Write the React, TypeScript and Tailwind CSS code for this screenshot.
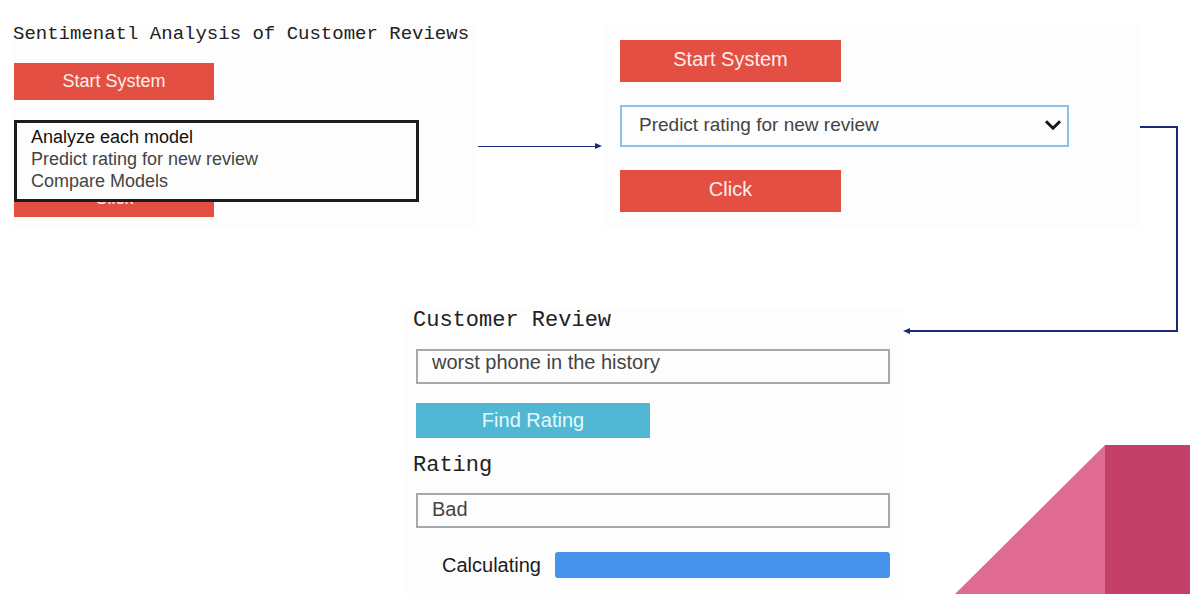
import type { ReactNode } from 'react';

const NAVY = '#1b2a78';

function ActionButton({ className, children }: { className: string; children: ReactNode }) {
  return (
    <button type="button" className={`flex items-center justify-center ${className}`}>
      {children}
    </button>
  );
}

function ModelPicker() {
  return (
    <section className="bg-[#fdfdfd] pb-3 pl-px">
      <h1 className="-ml-px whitespace-nowrap font-['Liberation_Mono',monospace] text-[19px] leading-5 text-[#222]">
        Sentimenatl Analysis of Customer Reviews
      </h1>
      <ActionButton className="mt-[19px] h-[37px] w-[200px] bg-[#e35043] pb-0.5 text-lg text-[#fdeeea]">
        Start System
      </ActionButton>
      <div className="relative mt-5">
        <select
          size={3}
          aria-label="Action"
          className="absolute left-0 top-0 z-10 h-[82px] w-[405px] appearance-none overflow-hidden border-3 border-[#1c1c1c] bg-[#fdfdfd] px-3.5 py-1 text-lg leading-[22px] text-[#444] outline-none"
        >
          <option className="h-[22px] min-h-0 p-0 text-[#111]">Analyze each model</option>
          <option className="h-[22px] min-h-0 p-0">Predict rating for new review</option>
          <option className="h-[22px] min-h-0 p-0">Compare Models</option>
        </select>
        <div className="pt-[60px]">
          <ActionButton className="h-[37px] w-[200px] bg-[#e35043] pb-0.5 text-lg text-[#fdeeea]">
            Click
          </ActionButton>
        </div>
      </div>
    </section>
  );
}

function SelectedAction() {
  return (
    <section className="bg-[#fdfdfd] px-[18px] pb-4 pt-4">
      <ActionButton className="h-[42px] w-[221px] bg-[#e35043] pb-1 text-xl text-[#fdeeea]">
        Start System
      </ActionButton>
      <div className="relative mt-[23px] h-[42px] max-w-[449px]">
        <select
          aria-label="Selected action"
          defaultValue="predict"
          className="h-full w-full appearance-none border-2 border-[#8fbfe8] bg-[#fdfdfd] pb-0.5 pl-[17px] text-[19px] text-[#444] outline-none"
        >
          <option value="analyze">Analyze each model</option>
          <option value="predict">Predict rating for new review</option>
          <option value="compare">Compare Models</option>
        </select>
        <svg
          viewBox="0 0 18 12"
          className="pointer-events-none absolute right-[7px] top-3.5 h-3 w-[18px]"
          fill="none"
          stroke="#151515"
          strokeWidth="3"
          aria-hidden="true"
        >
          <path d="M2 2.2 9 9.2 16 2.2" />
        </svg>
      </div>
      <ActionButton className="mt-[23px] h-[42px] w-[221px] bg-[#e35043] pb-1 text-xl text-[#fdeeea]">
        Click
      </ActionButton>
    </section>
  );
}

function ReviewForm() {
  const label = "-ml-[3px] block font-['Liberation_Mono',monospace] text-[22px] leading-7 text-[#222]";
  const field =
    'block h-[35px] w-full border-2 border-[#a8a8a8] bg-[#fdfdfd] px-3.5 text-xl text-[#444] outline-none';
  return (
    <section className="bg-[#fdfdfd] pl-3.5 pr-[13px]">
      <label htmlFor="review" className={label}>
        Customer Review
      </label>
      <input id="review" defaultValue="worst phone in the history" className={`mt-3.5 pb-2 ${field}`} />
      <ActionButton className="mt-[19px] h-[35px] w-[234px] bg-[#51b7d3] pb-0.5 text-xl text-[#e2fbff]">
        Find Rating
      </ActionButton>
      <label htmlFor="rating" className={`mt-3.5 ${label}`}>
        Rating
      </label>
      <input id="rating" defaultValue="Bad" readOnly className={`mt-[13px] pb-0.5 ${field}`} />
      <div className="mt-6 flex items-center gap-3.5 pl-[26px]">
        <label htmlFor="progress" className="text-xl leading-[26px] text-[#1c1c1c]">
          Calculating
        </label>
        <progress
          id="progress"
          value={100}
          max={100}
          className="h-[26px] min-w-0 flex-1 appearance-none overflow-hidden rounded-[3px] [&::-webkit-progress-bar]:bg-[#4793eb] [&::-webkit-progress-value]:bg-[#4793eb]"
        />
      </div>
    </section>
  );
}

export default function App() {
  return (
    <main className="flex min-h-screen flex-col bg-white font-['Liberation_Sans',sans-serif]">
      <div className="grid h-[307px] grid-cols-[465fr_124fr_538fr_50fr] pl-[13px]">
        <div className="min-w-0 pt-6">
          <ModelPicker />
        </div>
        <div className="mt-[139px] flex h-[14px] items-center self-start">
          <div className="h-px flex-1 bg-[#1b2a78]" />
          <svg viewBox="0 0 7 6" className="h-1.5 w-[7px]" aria-hidden="true">
            <path d="M0 0 7 3 0 6Z" fill={NAVY} />
          </svg>
        </div>
        <div className="min-w-0 pt-6">
          <SelectedAction />
        </div>
        <div className="mr-3 mt-[126px] border-r-2 border-t-2 border-[#1b2a78]" />
      </div>
      <div className="grid flex-1 grid-cols-[402fr_501fr_287fr]">
        <div />
        <ReviewForm />
        <div className="flex flex-col justify-between">
          <div className="relative ml-1 mr-3 h-[25px] border-b-2 border-r-2 border-[#1b2a78]">
            <svg viewBox="0 0 7 6" className="absolute -bottom-1 -left-1 h-1.5 w-[7px]" aria-hidden="true">
              <path d="M7 0 0 3 7 6Z" fill={NAVY} />
            </svg>
          </div>
          <svg viewBox="0 0 235 149" className="h-[149px] w-[235px] self-end" aria-hidden="true">
            <path d="M0 149 150 0V149Z" fill="#df6a92" />
            <path d="M150 0H235V149H150Z" fill="#c34168" />
          </svg>
        </div>
      </div>
    </main>
  );
}
